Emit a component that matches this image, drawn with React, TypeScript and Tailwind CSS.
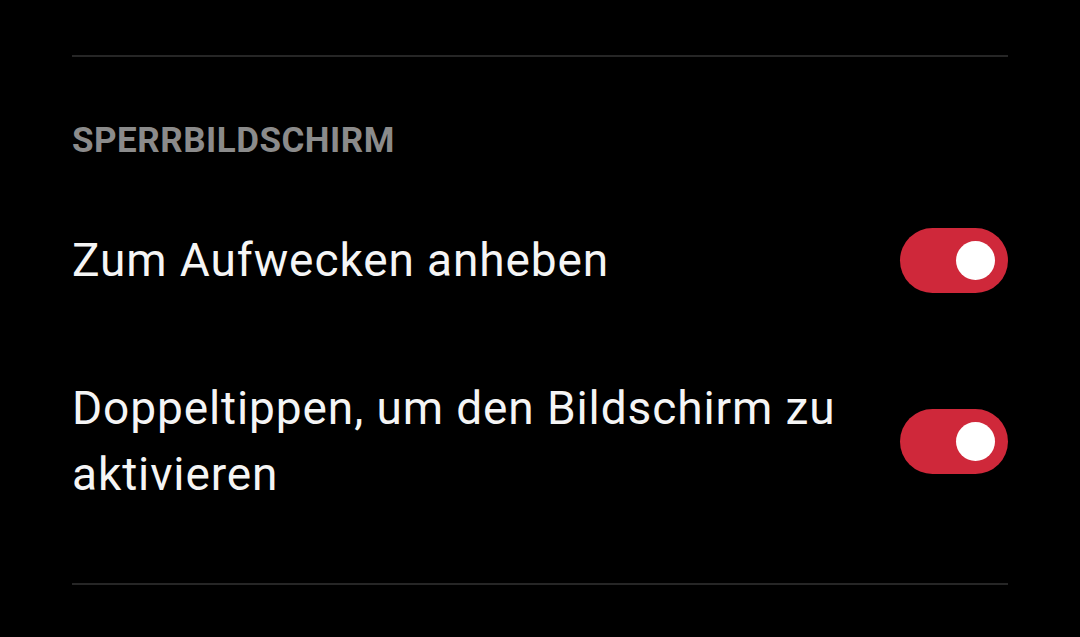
const Toggle = () => (
    <div className="relative w-[108px] h-[65px] shrink-0 rounded-full bg-[#cf283a]">
        <div className="absolute right-[13px] top-[13px] w-[39px] h-[39px] rounded-full bg-white" />
    </div>
);

const Row = ({ label, className }: { label: string; className?: string }) => (
    <div className={`flex items-center justify-between ${className ?? ""}`}>
        <span className="flex-1 pr-[40px] text-[46px] leading-[66px] tracking-[0.9px] text-[#f5f5f5]">{label}</span>
        <Toggle />
    </div>
);

export default function App() {
    return (
        <div
            className="w-[1080px] h-[637px] bg-black px-[72px] pt-[55px] overflow-hidden"
            style={{ fontFamily: "Roboto, 'Noto Sans', sans-serif" }}
        >
            <div className="h-[2px] bg-[#262626]" />
            <div className="mt-[64px] text-[35px] leading-[40px] tracking-[0.5px] font-bold text-[#8b8b8b]">SPERRBILDSCHIRM</div>
            <Row label="Zum Aufwecken anheben" className="mt-[66px]" />
            <Row label="Doppeltippen, um den Bildschirm zu aktivieren" className="mt-[82px]" />
            <div className="mt-[76px] h-[2px] bg-[#262626]" />
        </div>
    );
}
